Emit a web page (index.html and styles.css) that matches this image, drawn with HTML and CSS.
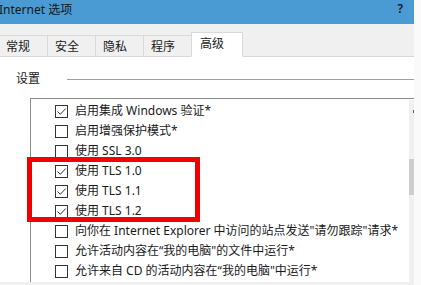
FILE: index.html
```html
<!DOCTYPE html>
<html lang="zh-CN">
<head>
<meta charset="utf-8">
<title>Internet 选项</title>
<link rel="stylesheet" href="styles.css">
</head>
<body>
<div class="window">
  <div class="titlebar">
    <span class="title">Internet 选项</span>
    <span class="help">?</span>
  </div>
  <div class="tabs">
    <div class="tab">常规</div>
    <div class="tab">安全</div>
    <div class="tab">隐私</div>
    <div class="tab">程序</div>
    <div class="tab selected">高级</div>
  </div>
  <div class="panel">
    <div class="group-head">
      <span class="group-label">设置</span>
      <span class="group-line"></span>
    </div>
    <div class="listbox">
      <div class="rows">
        <div class="row"><span class="cb checked"><svg viewBox="0 0 11 11"><path d="M1.5 5.5 L4.3 8.3 L9.7 2.5" /></svg></span><span class="label">启用集成 Windows 验证*</span></div>
        <div class="row"><span class="cb"></span><span class="label">启用增强保护模式*</span></div>
        <div class="row"><span class="cb"></span><span class="label">使用 SSL 3.0</span></div>
        <div class="row"><span class="cb checked"><svg viewBox="0 0 11 11"><path d="M1.5 5.5 L4.3 8.3 L9.7 2.5" /></svg></span><span class="label">使用 TLS 1.0</span></div>
        <div class="row"><span class="cb checked"><svg viewBox="0 0 11 11"><path d="M1.5 5.5 L4.3 8.3 L9.7 2.5" /></svg></span><span class="label">使用 TLS 1.1</span></div>
        <div class="row"><span class="cb checked"><svg viewBox="0 0 11 11"><path d="M1.5 5.5 L4.3 8.3 L9.7 2.5" /></svg></span><span class="label">使用 TLS 1.2</span></div>
        <div class="row"><span class="cb"></span><span class="label">向你在 Internet Explorer 中访问的站点发送"请勿跟踪"请求*</span></div>
        <div class="row"><span class="cb"></span><span class="label">允许活动内容在“我的电脑"的文件中运行*</span></div>
        <div class="row"><span class="cb"></span><span class="label">允许来自 CD 的活动内容在“我的电脑"中运行*</span></div>
      </div>
      <div class="scrollbar">
        <span class="arrow-mark"></span>
        <div class="thumb"></div>
      </div>
    </div>
  </div>
  <div class="bottom-strip"></div>
</div>
<div class="highlight"></div>
</body>
</html>
```

FILE: styles.css
```css
html, body {
  margin: 0;
  padding: 0;
}
body {
  width: 421px;
  height: 285px;
  overflow: hidden;
  background: #fafafa;
  font-family: "Noto Sans", "Noto Sans CJK SC", sans-serif;
  font-size: 12px;
  color: #1a1a1a;
  position: relative;
}
.window {
  width: 414px;
  height: 285px;
  display: flex;
  flex-direction: column;
}
.titlebar {
  height: 24px;
  background: #4a9bd3;
  display: flex;
  align-items: center;
  justify-content: space-between;
  flex-shrink: 0;
}
.title {
  margin-left: -1px;
  margin-top: -4px;
  color: #101820;
  font-size: 12px;
  line-height: 16px;
}
.help {
  margin-right: 11px;
  margin-top: -7px;
  color: #101820;
  font-size: 12px;
  font-weight: 600;
  line-height: 16px;
}
.tabs {
  height: 33px;
  flex-shrink: 0;
  background: #f0f0f0;
  border-bottom: 1px solid #d9d9d9;
  display: flex;
  align-items: flex-end;
  box-sizing: border-box;
}
.tab {
  width: 48px;
  height: 22px;
  box-sizing: border-box;
  border-top: 1px solid #d9d9d9;
  border-right: 1px solid #d9d9d9;
  padding-left: 6px;
  line-height: 21px;
  color: #1a1a1a;
  margin-bottom: -1px;
  background: #f0f0f0;
  border-bottom: 1px solid #d9d9d9;
}
.tab:nth-child(n+2) {
  padding-left: 7px;
}
.tab.selected {
  width: 52px;
  height: 25px;
  margin-left: -1px;
  border-left: 1px solid #d9d9d9;
  background: #ffffff;
  border-bottom: 1px solid #ffffff;
  padding-left: 8px;
  line-height: 22px;
}
.panel {
  flex: 1;
  background: #ffffff;
  display: flex;
  flex-direction: column;
  min-height: 0;
}
.group-head {
  height: 41px;
  display: flex;
  align-items: center;
  padding-left: 16px;
  padding-top: 3px;
  box-sizing: border-box;
  flex-shrink: 0;
}
.group-label {
  width: 51px;
  line-height: 16px;
}
.group-line {
  flex: 1;
  height: 1px;
  background: #a0a0a0;
}
.listbox {
  margin-left: 30px;
  flex: 1;
  border-top: 1px solid #8c8c8c;
  border-left: 1px solid #8c8c8c;
  display: flex;
  min-height: 0;
  overflow: hidden;
}
.rows {
  flex: 1;
  padding-top: 2px;
  display: flex;
  flex-direction: column;
}
.row {
  height: 20px;
  flex-shrink: 0;
  display: flex;
  align-items: center;
  padding-left: 24px;
  white-space: nowrap;
}
.cb {
  width: 13px;
  height: 13px;
  box-sizing: border-box;
  border: 1px solid #333333;
  background: #ffffff;
  margin-right: 7px;
  display: flex;
  align-items: center;
  justify-content: center;
  flex-shrink: 0;
}
.cb svg {
  width: 11px;
  height: 11px;
  fill: none;
  stroke: #333333;
  stroke-width: 1;
}
.label {
  line-height: 16px;
  color: #1a1a1a;
}
.scrollbar {
  width: 5px;
  margin-top: 1px;
  background: #f0f0f0;
  position: relative;
  flex-shrink: 0;
}
.arrow-mark {
  position: absolute;
  right: 0;
  top: 10px;
  width: 1px;
  height: 3px;
  background: #606060;
}
.thumb {
  margin-top: 59px;
  height: 36px;
  background: #cdcdcd;
}
.bottom-strip {
  height: 3px;
  background: #f0f0f0;
  flex-shrink: 0;
}
.highlight {
  position: absolute;
  left: 27px;
  top: 157px;
  width: 173px;
  height: 65px;
  box-sizing: border-box;
  border: 5px solid #f00000;
}
```
